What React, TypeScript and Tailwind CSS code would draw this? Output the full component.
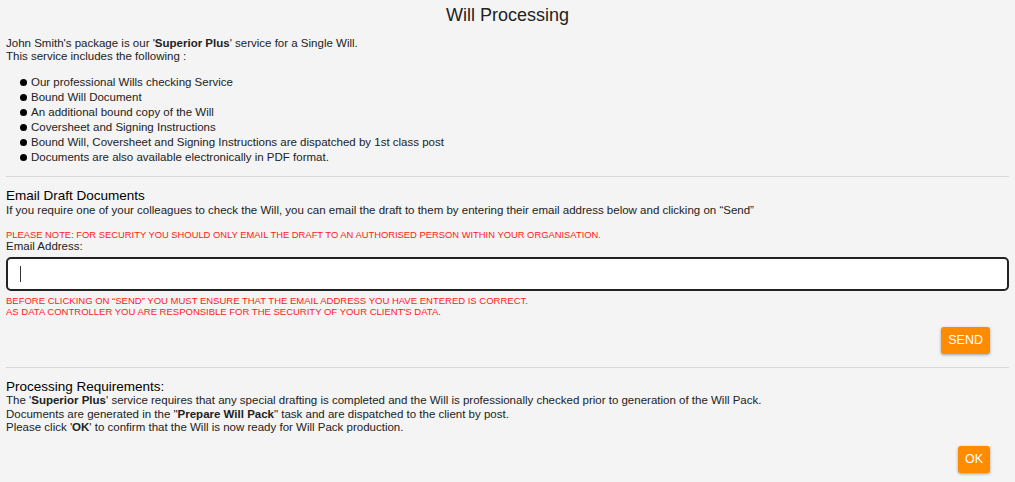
import React from 'react';

const items = [
  'Our professional Wills checking Service',
  'Bound Will Document',
  'An additional bound copy of the Will',
  'Coversheet and Signing Instructions',
  'Bound Will, Coversheet and Signing Instructions are dispatched by 1st class post',
  'Documents are also available electronically in PDF format.',
];

const App: React.FC = () => {
  return (
    <div className="min-h-screen w-full bg-[#f4f4f4] font-['Liberation_Sans',Arial,sans-serif] text-[11.5px] text-[#222] px-[6px] pb-4">
      <h1 className="text-center text-[18px] text-[#222] pt-[4px] leading-[22px]">Will Processing</h1>

      <div className="mt-[11px] leading-[13px]">
        <p>
          John Smith's package is our '<b>Superior Plus</b>' service for a Single Will.
        </p>
        <p>This service includes the following :</p>
      </div>

      <ul className="mt-[12px] pl-[14px] leading-[15px]">
        {items.map((t) => (
          <li key={t} className="flex items-center gap-[4px]">
            <span className="inline-block w-[7px] h-[7px] rounded-full bg-black" />
            <span>{t}</span>
          </li>
        ))}
      </ul>

      <hr className="mt-[11px] border-0 border-t border-[#d8d8d8]" />

      <section className="mt-[11px]">
        <h2 className="text-[13.5px] leading-[15px] font-medium text-black">Email Draft Documents</h2>
        <p className="leading-[14px]">
          If you require one of your colleagues to check the Will, you can email the draft to them by entering their email address below and clicking on “Send”
        </p>
        <p className="mt-[12px] text-[9.4px] leading-[11px] text-[#ff1a1a] uppercase">
          Please note: For security you should only email the draft to an authorised person within your organisation.
        </p>
        <label className="block leading-[13px]">Email Address:</label>
        <div className="relative mt-[4px]">
          <input
            type="text"
            autoFocus
            className="block w-full h-[34px] bg-white border-2 border-[#222] rounded-[5px] px-[12px] outline-none caret-black"
          />
          {/* caret shown as in the screenshot */}
          <span className="absolute left-[14px] top-[9px] w-px h-[16px] bg-[#333]" />
        </div>
        <div className="mt-[4px] text-[9.5px] leading-[11px] text-[#ff1a1a] uppercase">
          <p>Before clicking on “Send” you must ensure that the email address you have entered is correct.</p>
          <p>As data controller you are responsible for the security of your client's data.</p>
        </div>
        <div className="flex justify-end pr-[19px] mt-[10px]">
          <button className="h-[27px] px-[7px] bg-[#ff8c00] text-white text-[12.5px] font-medium rounded-[3px] shadow-[0_1px_3px_rgba(0,0,0,0.35)]">
            SEND
          </button>
        </div>
      </section>

      <hr className="mt-[13px] border-0 border-t border-[#d8d8d8]" />

      <section className="mt-[11px]">
        <h2 className="text-[13.5px] leading-[15px] font-medium text-black">Processing Requirements:</h2>
        <div className="leading-[13.5px]">
          <p>
            The '<b>Superior Plus</b>' service requires that any special drafting is completed and the Will is professionally checked prior to generation of the Will Pack.
          </p>
          <p>
            Documents are generated in the "<b>Prepare Will Pack</b>" task and are dispatched to the client by post.
          </p>
          <p>
            Please click '<b>OK</b>' to confirm that the Will is now ready for Will Pack production.
          </p>
        </div>
        <div className="flex justify-end pr-[19px] mt-[11px]">
          <button className="h-[27px] px-[7px] bg-[#ff8c00] text-white text-[12.5px] font-medium rounded-[3px] shadow-[0_1px_3px_rgba(0,0,0,0.35)]">
            OK
          </button>
        </div>
      </section>
    </div>
  );
};

export default App;
